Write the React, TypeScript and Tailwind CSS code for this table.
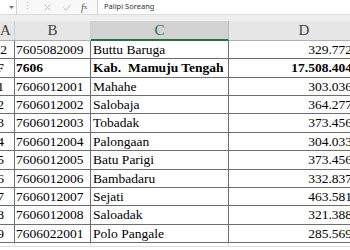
import React from "react";

const rows: { a: string; aPad: string; b: string; c: string; d: string; bold?: boolean; h: string }[] = [
  { a: "12", aPad: "pr-[7px]", b: "7605082009", c: "Buttu Baruga", d: "329.772", h: "h-[18px]" },
  { a: "F", aPad: "pr-[10px]", b: "7606", c: "Kab.\u00a0\u00a0Mamuju Tengah", d: "17.508.404", bold: true, h: "h-[19px]" },
  { a: "1", aPad: "pr-[10px]", b: "7606012001", c: "Mahahe", d: "303.036", h: "h-[18px]" },
  { a: "2", aPad: "pr-[10px]", b: "7606012002", c: "Salobaja", d: "364.277", h: "h-[18px]" },
  { a: "3", aPad: "pr-[10px]", b: "7606012003", c: "Tobadak", d: "373.456", h: "h-[19px]" },
  { a: "4", aPad: "pr-[10px]", b: "7606012004", c: "Palongaan", d: "304.033", h: "h-[18px]" },
  { a: "5", aPad: "pr-[10px]", b: "7606012005", c: "Batu Parigi", d: "373.456", h: "h-[19px]" },
  { a: "6", aPad: "pr-[10px]", b: "7606012006", c: "Bambadaru", d: "332.837", h: "h-[18px]" },
  { a: "7", aPad: "pr-[10px]", b: "7606012007", c: "Sejati", d: "463.581", h: "h-[18px]" },
  { a: "8", aPad: "pr-[10px]", b: "7606012008", c: "Saloadak", d: "321.388", h: "h-[19px]" },
  { a: "9", aPad: "pr-[10px]", b: "7606022001", c: "Polo Pangale", d: "285.569", h: "h-[18px]" },
];

export default function App() {
  return (
    <div className="w-[350px] h-[250px] overflow-hidden bg-white" style={{ fontFamily: '"Liberation Serif", serif' }}>
      {/* formula bar */}
      <div className="h-[15px] flex bg-[#f8f8f8] border-b border-[#dcdcdc]">
        <div className="w-[17px] h-[14px] bg-white border-r border-[#d0d0d0] flex items-center justify-end pr-[2px]">
          <svg width="5" height="3" viewBox="0 0 5 3"><path d="M0 0 L5 0 L2.5 3 Z" fill="#777" /></svg>
        </div>
        <div className="w-[20px] flex items-center justify-center text-[#b4b4b4] text-[9px]">⋮</div>
        <div className="w-[20px] flex items-center justify-center">
          <svg width="7" height="7" viewBox="0 0 7 7"><path d="M0.5 0.5 L6.5 6.5 M6.5 0.5 L0.5 6.5" stroke="#b8b8b8" strokeWidth="0.9" /></svg>
        </div>
        <div className="w-[20px] flex items-center justify-center">
          <svg width="8" height="7" viewBox="0 0 8 7"><path d="M0.5 3.8 L3 6.2 L7.5 0.8" stroke="#b8b8b8" strokeWidth="0.9" fill="none" /></svg>
        </div>
        <div className="w-[20px] flex items-center justify-start pl-[4px] text-[10px] italic text-[#555]" style={{ fontFamily: '"Liberation Serif", serif' }}>
          f<span className="text-[7px] not-italic">x</span>
        </div>
        <div className="flex-1 h-[14px] bg-white border-l border-[#d0d0d0] flex items-center pl-[6px] text-[7.5px] text-[#333]" style={{ fontFamily: '"Noto Sans", sans-serif' }}>
          Palipi Soreang
        </div>
      </div>
      <div className="h-[6px] bg-[#eeeeee]" />
      {/* column headers */}
      <div className="flex h-[20px] bg-[#e6e6e6] border-b border-[#aeaeae] text-[15px] text-[#444] leading-none">
        <div className="w-[15px] shrink-0 border-r border-[#cfcfcf] flex items-center justify-start overflow-hidden">A</div>
        <div className="w-[76px] shrink-0 border-r border-[#cfcfcf] flex items-center justify-center">B</div>
        <div className="w-[138px] shrink-0 bg-[#d2d2d2] border-r border-[#b8b8b8] border-b-2 border-b-[#217346] -mb-px flex items-center justify-center text-[#217346]">C</div>
        <div className="w-[150px] shrink-0 flex items-center justify-center">D</div>
      </div>
      {/* body */}
      {rows.map((r, i) => (
        <div key={i} className={`flex ${r.h} border-b border-[#6e6e6e] text-[13.5px] text-black leading-none ${r.bold ? "font-bold" : ""}`}>
          <div className={`w-[15px] shrink-0 border-r border-[#6e6e6e] flex items-center justify-end overflow-hidden whitespace-nowrap ${r.aPad}`}>{r.a}</div>
          <div className="w-[76px] shrink-0 border-r border-[#6e6e6e] flex items-center pl-[1px] whitespace-nowrap overflow-hidden">{r.b}</div>
          <div className="w-[138px] shrink-0 border-r border-[#6e6e6e] flex items-center pl-[2px] whitespace-nowrap overflow-hidden">{r.c}</div>
          <div className="w-[126px] shrink-0 flex items-center justify-end pr-[3px] whitespace-nowrap">{r.d}</div>
        </div>
      ))}
      <div className="flex h-[4px] border-b border-[#dedede]">
        <div className="w-[15px] shrink-0 border-r border-[#dedede]" />
        <div className="w-[76px] shrink-0 border-r border-[#dedede]" />
        <div className="w-[138px] shrink-0 border-r border-[#dedede]" />
        <div className="w-[126px] shrink-0" />
      </div>
    </div>
  );
}
